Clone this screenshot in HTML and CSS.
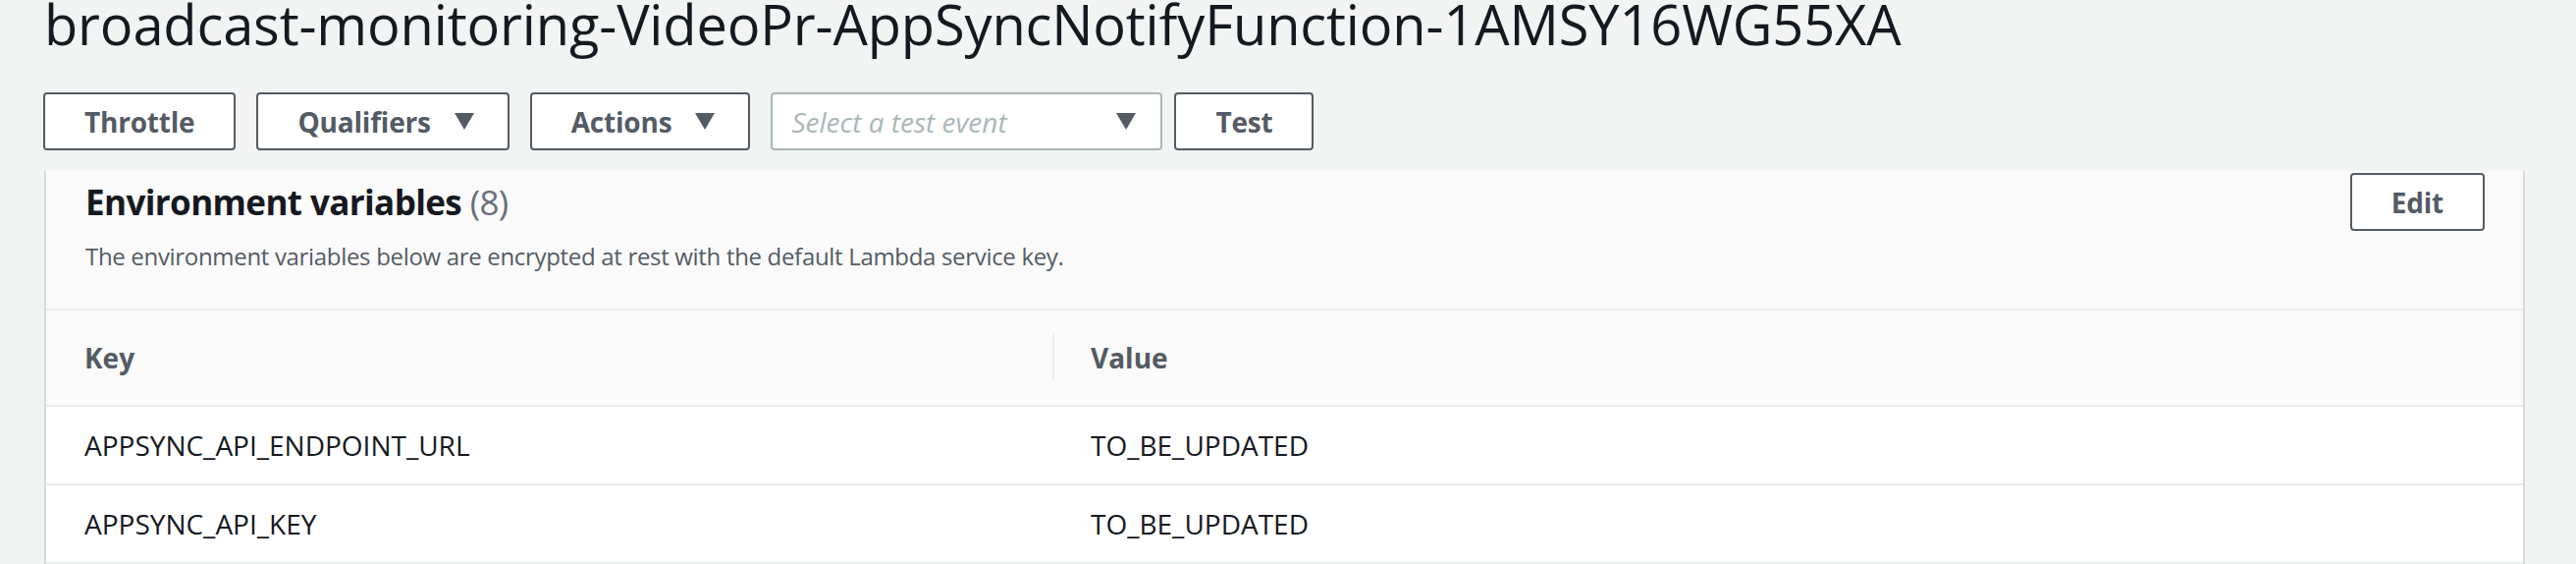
FILE: index.html
```html
<!DOCTYPE html>
<html lang="en">
<head>
<meta charset="utf-8">
<title>broadcast-monitoring-VideoPr-AppSyncNotifyFunction-1AMSY16WG55XA</title>
<link rel="stylesheet" href="styles.css">
</head>
<body>
<div class="page">
  <h1 class="title">broadcast-monitoring-VideoPr-AppSyncNotifyFunction-1AMSY16WG55XA</h1>
  <div class="toolbar">
    <button class="btn">Throttle</button>
    <button class="btn btn-drop">Qualifiers <span class="caret"></span></button>
    <button class="btn btn-drop">Actions <span class="caret"></span></button>
    <div class="select"><span class="placeholder">Select a test event</span><span class="caret"></span></div>
    <button class="btn">Test</button>
  </div>
  <section class="panel">
    <div class="panel-header">
      <div class="panel-titles">
        <h2 class="panel-title">Environment variables <span class="count">(8)</span></h2>
        <p class="panel-desc">The environment variables below are encrypted at rest with the default Lambda service key.</p>
      </div>
      <button class="btn btn-edit">Edit</button>
    </div>
    <div class="table">
      <div class="row head">
        <div class="cell">Key</div>
        <div class="cell cell-value"><span class="divider"></span>Value</div>
      </div>
      <div class="row">
        <div class="cell">APPSYNC_API_ENDPOINT_URL</div>
        <div class="cell cell-value">TO_BE_UPDATED</div>
      </div>
      <div class="row">
        <div class="cell">APPSYNC_API_KEY</div>
        <div class="cell cell-value">TO_BE_UPDATED</div>
      </div>
    </div>
  </section>
</div>
</body>
</html>
```
FILE: styles.css
```css
html, body {
  margin: 0;
  padding: 0;
  background: #f2f3f3;
  font-family: "Open Sans", "Noto Sans", sans-serif;
  color: #16191f;
  overflow: hidden;
}
.page {
  padding: 0 52px 0 45px;
}
.title {
  margin: 0;
  padding-top: 1px;
  font-size: 56px;
  line-height: 46px;
  font-weight: 400;
  letter-spacing: -0.15px;
  color: #16191f;
  white-space: nowrap;
}
.toolbar {
  display: flex;
  gap: 21px;
  margin-top: 47px;
  margin-left: -1px;
  height: 59px;
}
.btn {
  box-sizing: border-box;
  height: 59px;
  padding: 0 40px;
  border: 2px solid #545b64;
  border-radius: 4px;
  background: #ffffff;
  color: #545b64;
  font-family: inherit;
  font-size: 28px;
  font-weight: 700;
  letter-spacing: -0.2px;
  display: inline-flex;
  align-items: center;
  gap: 24px;
  cursor: pointer;
}
.btn-drop {
  padding-left: 40px;
  padding-right: 34px;
}
.caret {
  display: inline-block;
  width: 0;
  height: 0;
  border-left: 10px solid transparent;
  border-right: 10px solid transparent;
  border-top: 17px solid #545b64;
}
.select {
  box-sizing: border-box;
  width: 399px;
  height: 59px;
  border: 2px solid #aab7b8;
  border-radius: 4px;
  background: #ffffff;
  display: flex;
  align-items: center;
  justify-content: space-between;
  padding: 0 25px 0 19px;
  margin-right: -9px;
}
.placeholder {
  font-size: 28px;
  font-style: italic;
  color: #aab7b8;
}
.panel {
  margin-top: 21px;
  background: #fafafa;
  border-left: 2px solid #d5dbdb;
  border-right: 2px solid #d5dbdb;
}
.panel-header {
  display: flex;
  justify-content: space-between;
  align-items: flex-start;
  padding: 2px 39px 0 40px;
  height: 138px;
}
.panel-title {
  margin: 8px 0 0 0;
  font-size: 35px;
  line-height: 44px;
  font-weight: 700;
  letter-spacing: -0.6px;
  color: #16191f;
}
.count {
  font-weight: 400;
  color: #687078;
}
.panel-desc {
  margin: 17px 0 0 0;
  font-size: 24px;
  line-height: 32px;
  letter-spacing: -0.32px;
  color: #545b64;
}
.btn-edit {
  padding: 0 40px;
}
.table {
  border-top: 2px solid #eaeded;
}
.row {
  display: grid;
  grid-template-columns: 1025px 1fr;
  height: 78px;
  align-items: center;
  background: #ffffff;
  border-bottom: 2px solid #eaeded;
  font-size: 28px;
  line-height: 38px;
  color: #16191f;
}
.row.head {
  height: 96px;
  background: #fafafa;
  font-weight: 700;
  color: #545b64;
}
.cell {
  padding-left: 39px;
  white-space: nowrap;
}
.cell-value {
  position: relative;
  padding-left: 39px;
}
.divider {
  position: absolute;
  left: 0;
  top: 50%;
  margin-top: -24px;
  width: 2px;
  height: 47px;
  background: #eaeded;
}
```
